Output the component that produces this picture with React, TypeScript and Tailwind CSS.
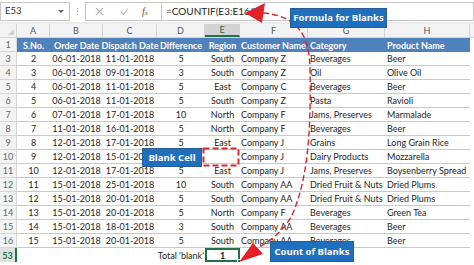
import React from "react";

const GRID = "grid grid-cols-[17px_33px_53px_54px_48px_35px_68px_77px_85px]";

type Row = [string, string, string, string, string, string, string, string, string];

const rows: Row[] = [
  ["3", "2", "06-01-2018", "11-01-2018", "5", "South", "Company Z", "Beverages", "Beer"],
  ["4", "3", "06-01-2018", "09-01-2018", "3", "South", "Company Z", "Oil", "Olive Oil"],
  ["5", "4", "06-01-2018", "11-01-2018", "5", "East", "Company C", "Beverages", "Beer"],
  ["6", "5", "06-01-2018", "11-01-2018", "5", "South", "Company Z", "Pasta", "Ravioli"],
  ["7", "6", "07-01-2018", "17-01-2018", "10", "North", "Company F", "Jams, Preserves", "Marmalade"],
  ["8", "7", "11-01-2018", "16-01-2018", "5", "North", "Company F", "Beverages", "Beer"],
  ["9", "8", "12-01-2018", "17-01-2018", "5", "East", "Company J", "Grains", "Long Grain Rice"],
  // D10 sits under the "Blank Cell" callout
  ["10", "9", "12-01-2018", "15-01-2018", "", "", "Company J", "Dairy Products", "Mozzarella"],
  ["11", "10", "12-01-2018", "17-01-2018", "5", "East", "Company J", "Jams, Preserves", "Boysenberry Spread"],
  ["12", "11", "15-01-2018", "25-01-2018", "10", "South", "Company AA", "Dried Fruit & Nuts", "Dried Plums"],
  ["13", "12", "15-01-2018", "20-01-2018", "5", "South", "Company AA", "Dried Fruit & Nuts", "Dried Plums"],
  ["14", "13", "15-01-2018", "20-01-2018", "5", "North", "Company F", "Beverages", "Green Tea"],
  ["15", "14", "15-01-2018", "18-01-2018", "3", "South", "Company AA", "Beverages", "Beer"],
  ["16", "15", "15-01-2018", "20-01-2018", "5", "South", "Company AA", "Beverages", "Beer"],
];

function FormulaBar() {
  return (
    <div className="flex h-[22px] items-center bg-white">
      {/* name box */}
      <div className="flex h-[19px] w-[70px] items-center justify-between border border-[#c6c6c6] pl-[4px] pr-[5px]">
        <span className="text-[9.5px] text-[#333]">E53</span>
        <span className="h-0 w-0 border-x-[3px] border-t-[3px] border-x-transparent border-t-[#666]" />
      </div>
      <div className="flex w-[15px] flex-col items-center gap-[2px]">
        <span className="h-[1px] w-[1px] bg-[#999]" />
        <span className="h-[1px] w-[1px] bg-[#999]" />
        <span className="h-[1px] w-[1px] bg-[#999]" />
      </div>
      {/* cancel / enter / fx */}
      <div className="flex h-[19px] w-[77px] items-center border border-[#c6c6c6] pl-[9px]">
        <svg width="9" height="9" viewBox="0 0 9 9" className="mr-[16px]">
          <path d="M1 1L8 8M8 1L1 8" stroke="#b5b5b5" strokeWidth="1.1" />
        </svg>
        <svg width="9" height="9" viewBox="0 0 9 9" className="mr-[13px]">
          <path d="M1 5L3.5 7.5L8 1.5" stroke="#b5b5b5" strokeWidth="1.1" fill="none" />
        </svg>
        <span className="font-['Liberation_Serif',serif] text-[10px] italic text-[#555]">
          f<span className="text-[7px]">x</span>
        </span>
      </div>
      <div className="flex h-[19px] flex-1 items-center border border-l-0 border-[#c6c6c6] pl-[4px]">
        <span className="text-[10px] text-[#222]">=COUNTIF(E3:E16,"")</span>
      </div>
    </div>
  );
}

function ColumnHeaders() {
  const letters = ["A", "B", "C", "D", "E", "F", "G", "H"];
  return (
    <div className={`${GRID} h-[14px] border-b border-[#d4d4d4] bg-[#f3f3f3] text-[9px] text-[#555]`}>
      <div className="relative border-r border-[#d4d4d4]">
        <span className="absolute bottom-[2px] right-[2px] h-0 w-0 border-b-[6px] border-l-[6px] border-b-[#d0d0d0] border-l-transparent" />
      </div>
      {letters.map((l) =>
        l === "E" ? (
          <div
            key={l}
            className="flex items-center justify-center border-b-2 border-r border-b-[#217346] border-r-[#d4d4d4] bg-[#d3d3d3] leading-none text-[#1d6b40]"
          >
            {l}
          </div>
        ) : (
          <div key={l} className="flex items-center justify-center border-r border-[#d4d4d4] leading-none">
            {l}
          </div>
        )
      )}
    </div>
  );
}

function RowNum({ n, active }: { n: string; active?: boolean }) {
  return active ? (
    <div className="flex items-center justify-center border-r-2 border-[#217346] bg-[#e1e1e1] font-bold leading-none text-[#217346]">
      {n}
    </div>
  ) : (
    <div className="flex items-center justify-center border-b border-r border-[#d6d6d6] bg-[#f3f3f3] leading-none text-[#666]">
      {n}
    </div>
  );
}

function HeaderRow() {
  return (
    <div className={`${GRID} h-[14px]`}>
      <RowNum n="1" />
      <div className="col-span-8 grid grid-cols-[33px_53px_54px_48px_35px_68px_77px_85px] bg-[#4f81bd] font-bold leading-none text-white">
        <div className="flex items-center justify-center">S.No.</div>
        <div className="flex items-center justify-center whitespace-nowrap">Order Date</div>
        <div className="flex items-center justify-center whitespace-nowrap">Dispatch Date</div>
        <div className="flex items-center justify-center">Difference</div>
        <div className="flex items-center justify-center">Region</div>
        <div className="flex items-center whitespace-nowrap pl-[1px]">Customer Name</div>
        <div className="flex items-center pl-[2px]">Category</div>
        <div className="flex items-center pl-[2px]">Product Name</div>
      </div>
    </div>
  );
}

function DataRow({ r }: { r: Row }) {
  return (
    <div className={`${GRID} h-[14px]`}>
      <RowNum n={r[0]} />
      <div className="col-span-8 grid grid-cols-[33px_53px_54px_48px_35px_68px_77px_85px] border-b border-[#b8cce4] leading-none">
        <div className="flex items-center justify-center">{r[1]}</div>
        <div className="flex items-center justify-center">{r[2]}</div>
        <div className="flex items-center justify-center">{r[3]}</div>
        <div className="flex items-center justify-center">{r[4]}</div>
        <div className="flex items-center justify-center">{r[5]}</div>
        <div className="flex items-center whitespace-nowrap pl-[1px]">{r[6]}</div>
        <div className="flex items-center whitespace-nowrap pl-[2px]">{r[7]}</div>
        <div className="flex items-center whitespace-nowrap pl-[2px]">{r[8]}</div>
      </div>
    </div>
  );
}

function TotalRow() {
  return (
    <div className={`${GRID} h-[14px]`}>
      <RowNum n="53" active />
      <div />
      <div />
      <div />
      <div className="flex items-center justify-end whitespace-nowrap pr-[1px] leading-none">Total 'blank'</div>
      <div className="relative flex items-center justify-center border-2 border-[#217346] font-bold leading-none">
        1
        <span className="absolute -bottom-[3px] -right-[3px] h-[4px] w-[4px] border border-white bg-[#217346]" />
      </div>
    </div>
  );
}

function Callout({ className, children }: { className: string; children: React.ReactNode }) {
  return (
    <div
      className={`absolute flex items-center justify-center border border-[#2a5c93] bg-[#1f6fbf] font-['Open_Sans',sans-serif] text-[9.5px] font-bold leading-none text-white ${className}`}
    >
      {children}
    </div>
  );
}

export default function App() {
  return (
    <div className="relative h-[265px] w-[474px] overflow-hidden bg-white font-['Lato',sans-serif] text-[9px] text-[#262626]">
      <FormulaBar />
      <div className="h-[2px] bg-[#ececec]" />
      <ColumnHeaders />
      <HeaderRow />
      {rows.map((r) => (
        <DataRow key={r[0]} r={r} />
      ))}
      <TotalRow />

      {/* annotations */}
      <svg className="pointer-events-none absolute inset-0" width="474" height="265" viewBox="0 0 474 265">
        <path
          d="M263 13 C298 16, 310 36, 310 70 C311 120, 309 170, 296 205 C290 225, 275 238, 258 248"
          fill="none"
          stroke="#d7262e"
          strokeWidth="1.4"
          strokeDasharray="6 3"
        />
        <polygon points="245,13 265,3 262,23" fill="#e3202a" />
        <polygon points="239,262 253,243 263,254" fill="#e3202a" />
        <rect x="203.5" y="148.5" width="35" height="17" fill="none" stroke="#d7262e" strokeWidth="2" strokeDasharray="6 3" />
      </svg>

      <Callout className="left-[290px] top-[8px] h-[20px] w-[97px]">Formula for Blanks</Callout>
      <Callout className="left-[142px] top-[148px] h-[19px] w-[60px]">Blank Cell</Callout>
      <Callout className="left-[270px] top-[241px] h-[21px] w-[84px]">Count of Blanks</Callout>
    </div>
  );
}
